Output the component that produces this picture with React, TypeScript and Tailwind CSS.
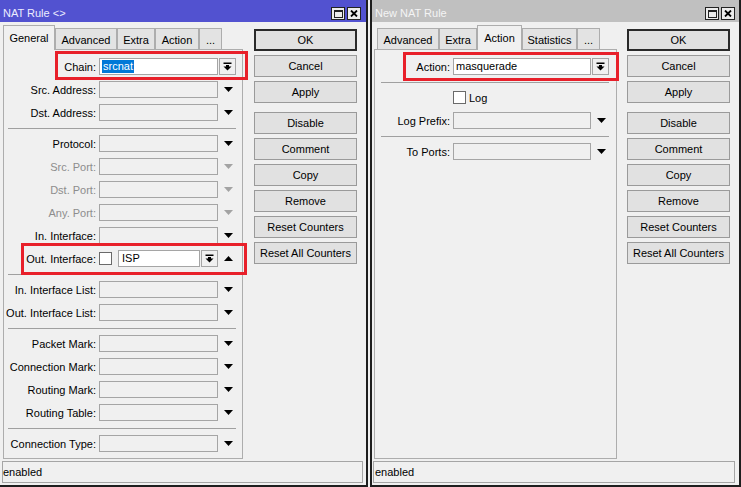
import React from "react";

const Down = ({ c = "#000" }: { c?: string }) => (
  <svg width="9" height="5" viewBox="0 0 9 5">
    <polygon points="0,0 9,0 4.5,5" fill={c} />
  </svg>
);

const Up = () => (
  <svg width="9" height="5" viewBox="0 0 9 5">
    <polygon points="0,5 9,5 4.5,0" fill="#000" />
  </svg>
);

const DropIcon = () => (
  <svg width="9" height="9" viewBox="0 0 9 9">
    <rect x="0.5" y="0.5" width="8" height="1.5" fill="#000" />
    <rect x="3" y="3" width="3" height="2" fill="#000" />
    <polygon points="0.5,4.5 8.5,4.5 4.5,8.5" fill="#000" />
  </svg>
);

const DropBtn = ({ cls = "" }: { cls?: string }) => (
  <div className={`w-[17px] h-[17px] border border-[#a5a5a5] bg-[#f0f0f0] flex items-center justify-center shrink-0 ${cls}`}>
    <DropIcon />
  </div>
);

const TitleBtns = ({ pr }: { pr: string }) => (
  <div className={`flex gap-[2px] pt-[7px] ${pr}`}>
    <div className="w-[14px] h-[13px] border border-[#222] bg-[#ececec] flex items-center justify-center">
      <div className="w-[9px] h-[8px] border border-[#222] border-t-2" />
    </div>
    <div className="w-[14px] h-[13px] border border-[#222] bg-[#ececec] flex items-center justify-center">
      <svg width="8" height="7" viewBox="0 0 8 7">
        <path d="M1 0.5 L7 6.5 M7 0.5 L1 6.5" stroke="#000" strokeWidth="1.8" />
      </svg>
    </div>
  </div>
);

type Tab = { name: string; w: string; active?: boolean };

const Tabs = ({ tabs, lead }: { tabs: Tab[]; lead: string }) => (
  <div className={`flex items-end h-[25px] ${lead}`}>
    {tabs.map((t) =>
      t.active ? (
        <div
          key={t.name}
          className={`${t.w} relative z-10 h-[25px] border border-b-0 border-[#adadad] bg-[#f0f0f0] flex items-center justify-center`}
        >
          {t.name}
        </div>
      ) : (
        <div
          key={t.name}
          className={`${t.w} h-[22px] border border-b-0 border-[#adadad] bg-[#e3e3e3] flex items-center justify-center pt-[1px]`}
        >
          {t.name}
        </div>
      )
    )}
  </div>
);

const Buttons = ({ ml }: { ml: string }) => {
  const names = ["OK", "Cancel", "Apply", "Disable", "Comment", "Copy", "Remove", "Reset Counters", "Reset All Counters"];
  return (
    <div className={`flex flex-col pt-[7px] gap-[4px] w-[103px] shrink-0 ${ml}`}>
      {names.map((n) => (
        <div
          key={n}
          className={`h-[22px] flex items-center justify-center bg-[#e1e1e1] ${
            n === "OK" ? "border-2 border-[#2a2a2a]" : "border border-[#9a9a9a]"
          } ${n === "Disable" ? "mt-[5px]" : ""}`}
        >
          {n}
        </div>
      ))}
    </div>
  );
};

const Sep = ({ cls }: { cls: string }) => <div className={`h-px bg-[#a0a0a0] mt-px shrink-0 ${cls}`} />;

const Field = ({
  label,
  disabled,
  lw,
  iw,
}: {
  label: string;
  disabled?: boolean;
  lw: string;
  iw: string;
}) => (
  <div className="flex items-center h-[17px] shrink-0">
    <div className={`${lw} text-right shrink-0 pt-px ${disabled ? "text-[#8d8d8d]" : ""}`}>{label}:</div>
    <div className={`${iw} ml-[3px] h-[17px] border border-[#a5a5a5] bg-[#f0f0f0] shrink-0`} />
    <div className="w-[20px] flex items-center justify-center shrink-0">
      <Down c={disabled ? "#a3a3a3" : "#000"} />
    </div>
  </div>
);

const Status = ({ cls }: { cls: string }) => (
  <div className={`mt-[2px] mb-[2px] h-[22px] border border-[#a5a5a5] flex items-center shrink-0 ${cls}`}>enabled</div>
);

function LeftWindow() {
  const L = "w-[92px]";
  const I = "w-[119px]";
  return (
    <div className="flex flex-col w-[368px] h-full border-r-2 border-b-2 border-[#1e1e1e] bg-[#f0f0f0] shrink-0">
      <div className="h-[22px] bg-[#5252d0] flex justify-between shrink-0">
        <div className="pl-[3px] pt-[8px] leading-[11px] text-[#ececff]">NAT Rule &lt;&gt;</div>
        <TitleBtns pr="pr-[5px]" />
      </div>
      <div className="flex-1 flex flex-col">
        <div className="flex-1 flex">
          <div className="flex flex-col pl-[3px] pt-[3px] w-[243px] shrink-0">
            <Tabs
              lead=""
              tabs={[
                { name: "General", w: "w-[52px]", active: true },
                { name: "Advanced", w: "w-[62px]" },
                { name: "Extra", w: "w-[38px]" },
                { name: "Action", w: "w-[44px]" },
                { name: "...", w: "w-[23px]" },
              ]}
            />
            <div className="-mt-px flex-1 border border-[#adadad] bg-[#f0f0f0] pt-[8px] flex flex-col gap-[6px]">
              <div className="flex items-center h-[17px] shrink-0">
                <div className={`${L} text-right shrink-0 pt-px`}>Chain:</div>
                <div className={`${I} ml-[3px] h-[17px] border border-[#a5a5a5] bg-white flex items-center pl-[2px] shrink-0`}>
                  <span className="bg-[#0078d7] text-white px-[1px] leading-[13px]">srcnat</span>
                </div>
                <DropBtn cls="ml-px" />
              </div>
              <Field label="Src. Address" lw={L} iw={I} />
              <Field label="Dst. Address" lw={L} iw={I} />
              <Sep cls="ml-[4px] mr-[6px]" />
              <Field label="Protocol" lw={L} iw={I} />
              <Field label="Src. Port" lw={L} iw={I} disabled />
              <Field label="Dst. Port" lw={L} iw={I} disabled />
              <Field label="Any. Port" lw={L} iw={I} disabled />
              <Field label="In. Interface" lw={L} iw={I} />
              <div className="flex items-center h-[17px] shrink-0">
                <div className={`${L} text-right shrink-0 pt-px`}>Out. Interface:</div>
                <div className="w-[13px] h-[13px] ml-[3px] border border-[#6a6a6a] bg-white shrink-0" />
                <div className="w-[82px] ml-[6px] h-[17px] border border-[#a5a5a5] bg-white flex items-center pl-[3px] shrink-0">
                  ISP
                </div>
                <DropBtn cls="ml-px" />
                <div className="w-[20px] flex items-center justify-center shrink-0">
                  <Up />
                </div>
              </div>
              <Sep cls="ml-[4px] mr-[6px]" />
              <Field label="In. Interface List" lw={L} iw={I} />
              <Field label="Out. Interface List" lw={L} iw={I} />
              <Sep cls="ml-[4px] mr-[6px]" />
              <Field label="Packet Mark" lw={L} iw={I} />
              <Field label="Connection Mark" lw={L} iw={I} />
              <Field label="Routing Mark" lw={L} iw={I} />
              <Field label="Routing Table" lw={L} iw={I} />
              <Sep cls="ml-[4px] mr-[6px]" />
              <Field label="Connection Type" lw={L} iw={I} />
            </div>
          </div>
          <Buttons ml="ml-[11px]" />
        </div>
        <Status cls="ml-[2px] mr-[3px]" />
      </div>
    </div>
  );
}

function RightWindow() {
  const L = "w-[75px]";
  const I = "w-[138px]";
  return (
    <div className="flex flex-col flex-1 h-full border-l-2 border-r-2 border-b-2 border-[#1e1e1e] bg-[#f0f0f0]">
      <div className="h-[22px] bg-[#c0c0c0] flex justify-between shrink-0">
        <div className="pl-[3px] pt-[8px] leading-[11px] text-[#f4f4f4]">New NAT Rule</div>
        <TitleBtns pr="pr-[4px]" />
      </div>
      <div className="flex-1 flex flex-col">
        <div className="flex-1 flex">
          <div className="flex flex-col pl-[2px] pt-[3px] w-[245px] shrink-0">
            <Tabs
              lead="pl-[3px]"
              tabs={[
                { name: "Advanced", w: "w-[62px]" },
                { name: "Extra", w: "w-[38px]" },
                { name: "Action", w: "w-[45px]", active: true },
                { name: "Statistics", w: "w-[55px]" },
                { name: "...", w: "w-[23px]" },
              ]}
            />
            <div className="-mt-px flex-1 border border-[#adadad] bg-[#f0f0f0] pt-[8px] flex flex-col gap-[6px]">
              <div className="flex items-center h-[17px] shrink-0">
                <div className={`${L} text-right shrink-0 pt-px`}>Action:</div>
                <div className={`${I} ml-[3px] h-[17px] border border-[#a5a5a5] bg-white flex items-center pl-[2px] shrink-0`}>
                  masquerade
                </div>
                <DropBtn cls="ml-px" />
              </div>
              <Sep cls="ml-[6px] mr-[7px]" />
              <div className="flex items-center h-[17px] shrink-0">
                <div className={`${L} shrink-0`} />
                <div className="w-[13px] h-[13px] ml-[3px] border border-[#6a6a6a] bg-white shrink-0" />
                <div className="ml-[3px] pt-px">Log</div>
              </div>
              <Field label="Log Prefix" lw={L} iw={I} />
              <Sep cls="ml-[6px] mr-[7px]" />
              <Field label="To Ports" lw={L} iw={I} />
            </div>
          </div>
          <Buttons ml="ml-[10px]" />
        </div>
        <Status cls="ml-px mr-[4px] pl-[1px]" />
      </div>
    </div>
  );
}

export default function App() {
  return (
    <div className="relative flex gap-[2px] w-[741px] h-[487px] overflow-hidden bg-[#f0f0f0] text-[11px] leading-[13px] text-black [font-family:'Liberation_Sans',Arial,sans-serif]">
      <LeftWindow />
      <RightWindow />
      <div className="absolute left-[55px] top-[51px] w-[193px] h-[29px] border-[3px] border-[#e8202a] pointer-events-none" />
      <div className="absolute left-[21px] top-[243px] w-[226px] h-[32px] border-[3px] border-[#e8202a] pointer-events-none" />
      <div className="absolute left-[403px] top-[52px] w-[216px] h-[29px] border-[3px] border-[#e8202a] pointer-events-none" />
    </div>
  );
}
